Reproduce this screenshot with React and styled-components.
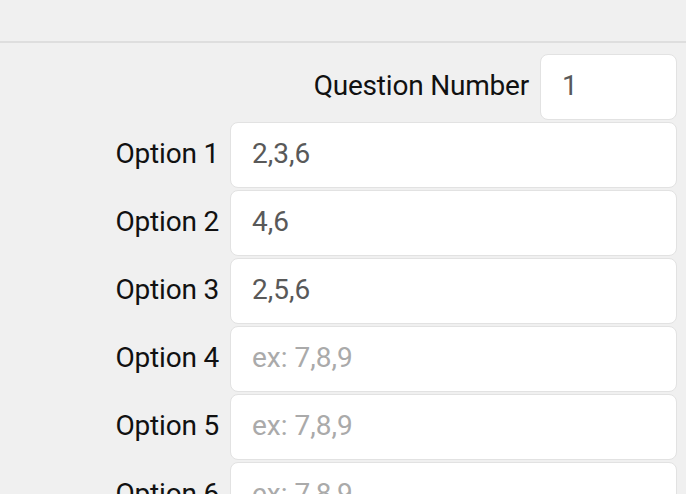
import React from 'react';
import styled, { createGlobalStyle } from 'styled-components';

const GlobalStyle = createGlobalStyle`
  html, body {
    margin: 0;
    padding: 0;
    background: #f0f0f0;
    font-family: Roboto, "Liberation Sans", sans-serif;
    overflow: hidden;
  }
`;

const Page = styled.div`
  width: 686px;
  height: 494px;
  overflow: hidden;
  background: #f0f0f0;
`;

const Header = styled.div`
  height: 41px;
  border-bottom: 2px solid #dedede;
`;

const Form = styled.div`
  display: flex;
  flex-direction: column;
  gap: 2px;
  padding: 11px 9px 0 0;
`;

const Row = styled.div`
  display: flex;
  justify-content: flex-end;
  align-items: center;
  gap: 11px;
`;

const Label = styled.label`
  font-size: 28px;
  letter-spacing: -0.2px;
  color: #111;
  white-space: nowrap;
  padding-bottom: 3px;
`;

const Input = styled.input`
  box-sizing: border-box;
  width: ${p => p.$width}px;
  height: 66px;
  padding: 0 0 4px 21px;
  border: 1px solid #e2e2e2;
  border-radius: 8px;
  background: #fff;
  font-family: Roboto, "Liberation Sans", sans-serif;
  font-size: 28px;
  color: #595959;
  outline: none;

  &::placeholder {
    color: #aaa;
  }
`;

const options = ['2,3,6', '4,6', '2,5,6', '', '', ''];

export default function App() {
  return (
    <Page>
      <GlobalStyle />
      <Header />
      <Form>
        <Row>
          <Label>Question Number</Label>
          <Input $width={137} defaultValue="1" />
        </Row>
        {options.map((v, i) => (
          <Row key={i}>
            <Label>Option {i + 1}</Label>
            <Input $width={447} defaultValue={v} placeholder="ex: 7,8,9" />
          </Row>
        ))}
      </Form>
    </Page>
  );
}
